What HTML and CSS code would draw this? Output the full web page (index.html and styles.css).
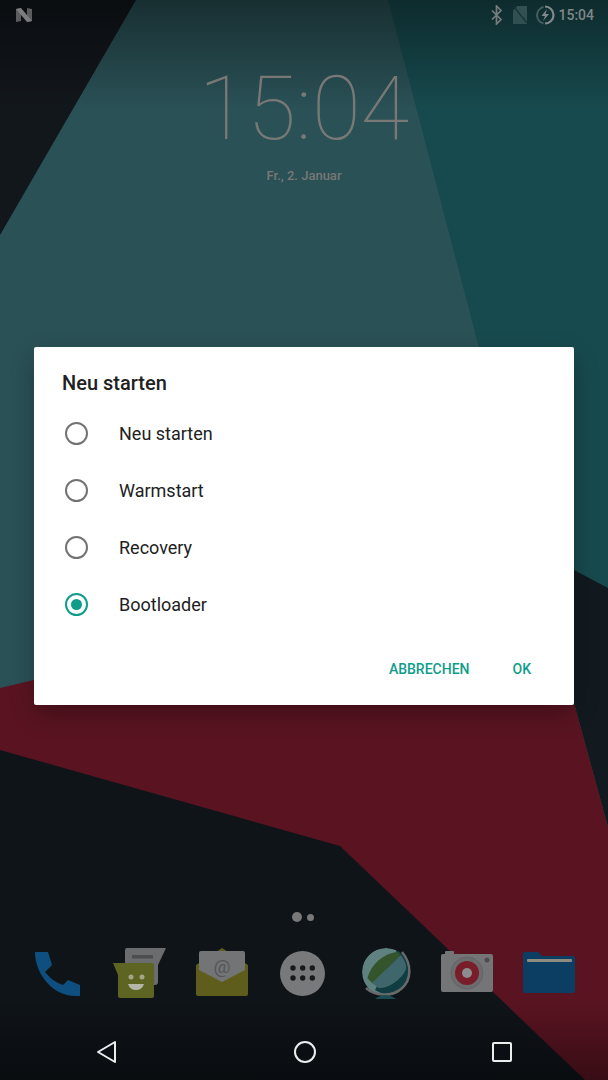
FILE: index.html
```html
<!DOCTYPE html>
<html lang="en">
<head>
    <meta charset="UTF-8">
    <meta name="viewport" content="width=device-width, initial-scale=1.0">
    <title>Neu starten</title>
    <link rel="stylesheet" href="styles.css">
</head>
<body>
    <!-- wallpaper, already dimmed by the dialog scrim -->
    <svg class="wallpaper" viewBox="0 0 608 1080" aria-hidden="true">
        <defs>
            <linearGradient id="top-shade" x1="0" y1="0" x2="0" y2="1">
                <stop offset="0" stop-color="#000" stop-opacity="0.42"/>
                <stop offset="1" stop-color="#000" stop-opacity="0"/>
            </linearGradient>
            <linearGradient id="bottom-shade" x1="0" y1="0" x2="0" y2="1">
                <stop offset="0" stop-color="#000" stop-opacity="0"/>
                <stop offset="1" stop-color="#000" stop-opacity="0.38"/>
            </linearGradient>
        </defs>
        <rect width="608" height="1080" fill="#174a4e"/>
        <polygon points="135,0 388,0 477,340 537,570 537,700 0,700 0,235" fill="#2a5156"/>
        <polygon points="0,0 136,0 0,235" fill="#12171c"/>
        <polygon points="608,588 574,570 574,703 608,827" fill="#121a1f"/>
        <polygon points="0,688 34,680 574,680 574,703 608,827 608,1080 0,1080" fill="#5a1421"/>
        <polygon points="0,750 340,846 585,1080 0,1080" fill="#0f1419"/>
        <rect y="0" width="608" height="110" fill="url(#top-shade)"/>
        <rect y="1000" width="608" height="80" fill="url(#bottom-shade)"/>
    </svg>

    <div class="screen">
        <header class="status-bar">
            <svg class="n-logo" viewBox="0 0 18 16" aria-hidden="true">
                <path d="M1 2l5 -1v13l-5 1zM12 1l5 1v12l-5 1z" fill="#5a5c5d"/>
                <path d="M1 2l5 -1l11 13l-5 1z" fill="#7b7d7e"/>
            </svg>
            <div class="status-icons">
                <svg class="status-icon" viewBox="0 0 14 20" aria-hidden="true">
                    <path d="M2 5.500l9 9-4.500 4.500V1l4.500 4.500-9 9" fill="none" stroke="#787c7d" stroke-width="1.700"/>
                </svg>
                <svg class="status-icon sim" viewBox="0 0 14 18" aria-hidden="true">
                    <path d="M4.500 0H14V18H0V4.500z" fill="#31504f"/>
                    <path d="M1 1L14 17" stroke="#183639" stroke-width="1.500"/>
                </svg>
                <svg class="status-icon battery" viewBox="0 0 20 20" aria-hidden="true">
                    <path d="M8.500 2A8.500 8.500 0 0 0 8.500 18.500" fill="none" stroke="#46605f" stroke-width="2"/>
                    <path d="M10 1.500A8.500 8.500 0 0 1 10 18.500" fill="none" stroke="#82898a" stroke-width="2.200"/>
                    <path d="M12 4L6.500 11h3.500l-2 5L14 9h-3.500z" fill="#82898a"/>
                </svg>
                <span class="status-time">15:04</span>
            </div>
        </header>

        <section class="clock">
            <div class="clock-time">15:04</div>
            <div class="clock-date">Fr., 2. Januar</div>
        </section>

        <div class="dialog">
            <h2 class="dialog-title">Neu starten</h2>
            <ul class="option-list">
                <li class="option"><span class="radio"></span>Neu starten</li>
                <li class="option"><span class="radio"></span>Warmstart</li>
                <li class="option"><span class="radio"></span>Recovery</li>
                <li class="option"><span class="radio radio-checked"></span>Bootloader</li>
            </ul>
            <div class="dialog-actions">
                <span class="action">ABBRECHEN</span>
                <span class="action">OK</span>
            </div>
        </div>

        <div class="page-dots">
            <span class="dot"></span>
            <span class="dot dot-small"></span>
        </div>

        <div class="dock">
            <!-- phone -->
            <svg class="dock-icon" viewBox="0 0 56 56" aria-hidden="true">
                <path d="M6 8H19L23 21 16 28Q24 38 34 41L39 36 51 41V52H46C24 52 6 30 6 8z" fill="#0e4f7f"/>
            </svg>
            <!-- messages -->
            <svg class="dock-icon" viewBox="0 0 56 56" aria-hidden="true">
                <path d="M16 4H55L47 21V38q0 3-3 3H14V6q0-2 2-2z" fill="#6b6c6d"/>
                <rect x="21" y="11" width="21" height="3.500" fill="#4d4e4f"/>
                <path d="M2 19H41q2 0 2 2V52q0 2-2 2H9q-2 0-2-2V31z" fill="#5e6422"/>
                <circle cx="20" cy="33" r="2.500" fill="#a5a689"/>
                <circle cx="31" cy="33" r="2.500" fill="#a5a689"/>
                <path d="M17 40H33q-2 6-8 6T17 40z" fill="#b5b6a8"/>
            </svg>
            <!-- email -->
            <svg class="dock-icon" viewBox="0 0 56 56" aria-hidden="true">
                <path d="M3 21L29 4 55 21V50q0 2-2 2H5q-2 0-2-2z" fill="#5f5d1c"/>
                <path d="M6 9q0-2 2-2H50q2 0 2 2V26L29 38 6 26z" fill="#737475"/>
                <text class="mail-at" x="29" y="29" text-anchor="middle">@</text>
            </svg>
            <!-- all apps -->
            <svg class="dock-icon" viewBox="0 0 56 56" aria-hidden="true">
                <circle cx="27.500" cy="29.500" r="22.500" fill="#78797a"/>
                <g fill="#17191c">
                    <circle cx="18" cy="24" r="2.700"/><circle cx="27.700" cy="24" r="2.700"/><circle cx="37.300" cy="24" r="2.700"/>
                    <circle cx="18" cy="34" r="2.700"/><circle cx="27.700" cy="34" r="2.700"/><circle cx="37.300" cy="34" r="2.700"/>
                </g>
            </svg>
            <!-- browser globe -->
            <svg class="dock-icon" viewBox="0 0 56 56" aria-hidden="true">
                <defs>
                    <clipPath id="globe-clip"><circle cx="29" cy="28" r="24"/></clipPath>
                </defs>
                <g clip-path="url(#globe-clip)">
                    <circle cx="29" cy="28" r="24" fill="#5f8280"/>
                    <path d="M40 6C52 12 58 26 52 38 46 50 30 54 18 46z" fill="#0f3d42"/>
                    <path d="M10.300 34.300C14 20 26 10 40.300 7.700L43.700 11 15.300 39.300z" fill="#34552c"/>
                    <path d="M15.300 39.300L43.700 11C48 16 50 22 48.700 26 44 36 32 44 22 44.300z" fill="#3f666a"/>
                </g>
                <path d="M45 8C55 20 55 36 44 45 34 53 18 52 9 44" fill="none" stroke="#68696a" stroke-width="2.500"/>
                <path d="M18 55Q28 47 39 55z" fill="#1a4c52"/>
            </svg>
            <!-- camera -->
            <svg class="dock-icon" viewBox="0 0 56 56" aria-hidden="true">
                <path d="M6 10V8q0-1 1-1h7q1 0 1 1v2H52q2 0 2 2V46q0 2-2 2H4q-2 0-2-2V12q0-2 2-2z" fill="#747576"/>
                <circle cx="28" cy="29" r="16" fill="#6b6c6d" stroke="#636465"/>
                <circle cx="28" cy="29" r="12" fill="#7a1d2a"/>
                <circle cx="28" cy="29" r="5" fill="#8b8c8d"/>
                <circle cx="48" cy="16" r="2.500" fill="#4c4d4f"/>
            </svg>
            <!-- files -->
            <svg class="dock-icon" viewBox="0 0 56 56" aria-hidden="true">
                <path d="M2 10q0-2 2-2H17l4 4H52q2 0 2 2V47q0 2-2 2H4q-2 0-2-2z" fill="#0c3d63"/>
                <rect x="6" y="15" width="45" height="3" rx="1" fill="#8d8b80"/>
            </svg>
        </div>

        <nav class="nav-bar">
            <svg class="nav-icon" viewBox="0 0 24 24" aria-hidden="true">
                <path d="M20 2V22L3 12z" fill="none" stroke="#eceeee" stroke-width="2" stroke-linejoin="round"/>
            </svg>
            <svg class="nav-icon" viewBox="0 0 24 24" aria-hidden="true">
                <circle cx="12" cy="12" r="10" fill="none" stroke="#eceeee" stroke-width="2"/>
            </svg>
            <svg class="nav-icon" viewBox="0 0 24 24" aria-hidden="true">
                <rect x="3" y="3" width="18" height="18" rx="1" fill="none" stroke="#eceeee" stroke-width="2"/>
            </svg>
        </nav>
    </div>
</body>
</html>
```

FILE: styles.css
```css
* {
    margin: 0;
    padding: 0;
    box-sizing: border-box;
}

body {
    font-family: Roboto, 'Liberation Sans', sans-serif;
    width: 608px;
    height: 1080px;
    overflow: hidden;
    position: relative;
    background-color: #11161b;
}

.wallpaper {
    position: absolute;
    top: 0;
    left: 0;
    width: 608px;
    height: 1080px;
}

.screen {
    position: relative;
    height: 1080px;
    display: flex;
    flex-direction: column;
}

.status-bar {
    height: 30px;
    padding: 0 14px 0 15px;
    display: flex;
    align-items: center;
    justify-content: space-between;
}

.n-logo {
    width: 18px;
    height: 16px;
}

.status-icons {
    display: flex;
    align-items: center;
}

.status-icon {
    width: 14px;
    height: 20px;
}

.status-icon.sim {
    height: 18px;
    margin-left: 9px;
}

.status-icon.battery {
    width: 20px;
    margin-left: 8px;
}

.status-time {
    font-size: 14px;
    font-weight: 500;
    color: #7f8788;
    margin-left: 3px;
}

.clock {
    height: 317px;
    padding-top: 27px;
    text-align: center;
    color: #787876;
}

.clock-time {
    font-size: 89px;
    font-weight: 100;
    line-height: 103px;
}

.clock-date {
    font-size: 13px;
    font-weight: 500;
    line-height: 16px;
    margin-top: 8px;
}

.dialog {
    width: 540px;
    height: 358px;
    margin-left: 34px;
    padding-top: 24px;
    background-color: #fff;
    border-radius: 2px;
    box-shadow: 0 10px 24px -2px rgba(0, 0, 0, 0.32);
}

.dialog-title {
    font-size: 20px;
    font-weight: 500;
    line-height: 24px;
    color: #212121;
    padding-left: 28px;
}

.option-list {
    list-style: none;
    margin-top: 10px;
}

.option {
    height: 57px;
    display: flex;
    align-items: center;
    font-size: 18px;
    color: #212121;
    padding-left: 31px;
}

.radio {
    width: 23px;
    height: 23px;
    border: 2px solid #737373;
    border-radius: 50%;
    margin-right: 31px;
    display: flex;
    align-items: center;
    justify-content: center;
}

.radio-checked {
    border-color: #0f9d8a;
}

.radio-checked::after {
    content: "";
    width: 11px;
    height: 11px;
    border-radius: 50%;
    background-color: #0f9d8a;
}

.dialog-actions {
    display: flex;
    justify-content: flex-end;
    gap: 43px;
    padding: 26px 43px 0 0;
}

.action {
    font-size: 14px;
    font-weight: 500;
    line-height: 20px;
    color: #0f9d8a;
}

.page-dots {
    height: 12px;
    margin-top: 206px;
    padding-left: 292px;
    display: flex;
    align-items: center;
    gap: 5px;
}

.dot {
    width: 10px;
    height: 10px;
    border-radius: 50%;
    background-color: #787878;
}

.dot-small {
    width: 7px;
    height: 7px;
}

.dock {
    height: 56px;
    margin-top: 21px;
    padding-left: 16px;
    display: grid;
    grid-template-columns: repeat(7, 82px);
    justify-items: center;
}

.dock-icon {
    width: 56px;
    height: 56px;
}

.mail-at {
    font-size: 19px;
    fill: #55565a;
}

.nav-bar {
    height: 56px;
    margin-top: 24px;
    padding: 0 94px 0 95px;
    display: flex;
    align-items: center;
    justify-content: space-between;
}

.nav-icon {
    width: 24px;
    height: 24px;
}
```
